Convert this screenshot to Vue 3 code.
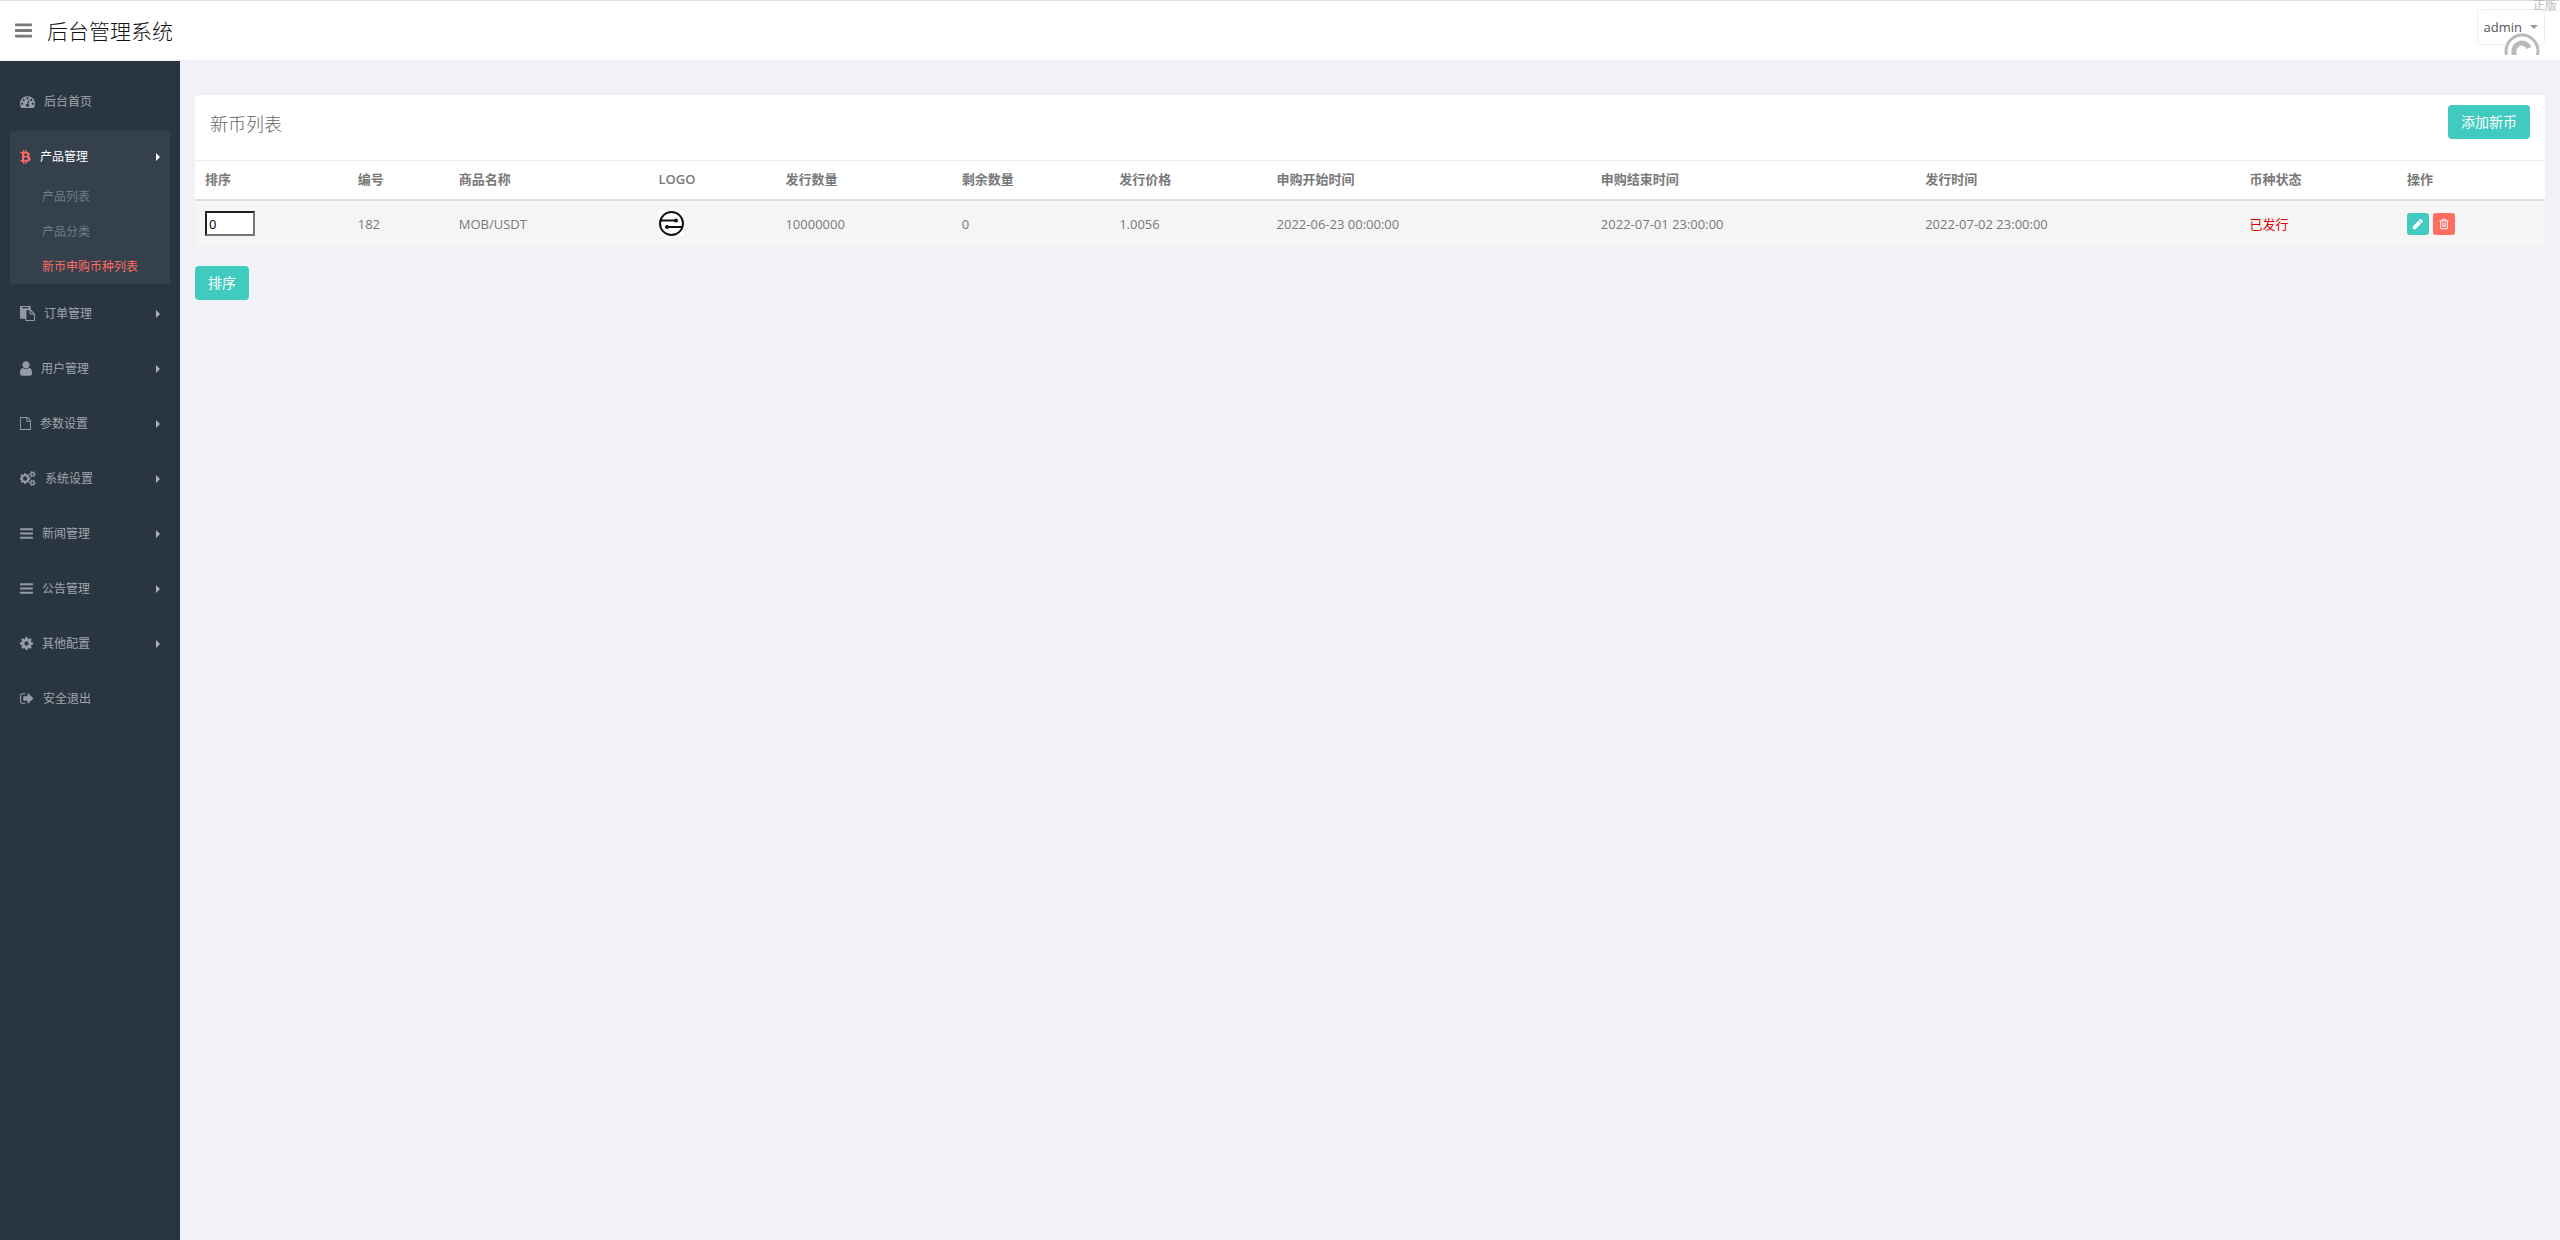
<script setup>
import { ref } from 'vue'

const icons = {
  bars: 'M1664 1344v128q0 26-19 45t-45 19h-1408q-26 0-45-19t-19-45v-128q0-26 19-45t45-19h1408q26 0 45 19t19 45zm0-512v128q0 26-19 45t-45 19h-1408q-26 0-45-19t-19-45v-128q0-26 19-45t45-19h1408q26 0 45 19t19 45zm0-512v128q0 26-19 45t-45 19h-1408q-26 0-45-19t-19-45v-128q0-26 19-45t45-19h1408q26 0 45 19t19 45z',
  dashboard: 'M384 1152q0-53-37.5-90.5t-90.5-37.5-90.5 37.5-37.5 90.5 37.5 90.5 90.5 37.5 90.5-37.5 37.5-90.5zm192-448q0-53-37.5-90.5t-90.5-37.5-90.5 37.5-37.5 90.5 37.5 90.5 90.5 37.5 90.5-37.5 37.5-90.5zm428 481l101-382q6-26-7.5-48.5t-38.5-29.5-48 6.5-30 39.5l-101 382q-60 5-107 43.5t-63 98.5q-20 77 20 146t117 89 146-20 89-117q16-60-6-117t-72-91zm660-33q0-53-37.5-90.5t-90.5-37.5-90.5 37.5-37.5 90.5 37.5 90.5 90.5 37.5 90.5-37.5 37.5-90.5zm-640-640q0-53-37.5-90.5t-90.5-37.5-90.5 37.5-37.5 90.5 37.5 90.5 90.5 37.5 90.5-37.5 37.5-90.5zm448 192q0-53-37.5-90.5t-90.5-37.5-90.5 37.5-37.5 90.5 37.5 90.5 90.5 37.5 90.5-37.5 37.5-90.5zm320 448q0 261-141 483-19 29-54 29h-1402q-35 0-54-29-141-221-141-483 0-182 71-348t191-286 286-191 348-71 348 71 286 191 191 286 71 348z',
  btc: 'M1399 618q18 182-131 258 117 28 175 103t45 214q-7 71-32.5 125t-64.5 89-97 58.5-121.5 34.5-145.5 15v255h-154v-251q-80 0-122-1v252h-154v-255q-18 0-54-.5t-55-.5h-200l31-183h111q50 0 58-51v-402h16q-6-1-16-1v-287q-13-68-89-68h-111v-164l212 1q64 0 97-1v-252h154v247q82-2 122-2v-245h154v252q79 7 140 22.5t113 45 82.5 78 36.5 114.5zm-215 545q0-36-15-64t-37-46-57.5-30.5-65.5-18.5-74-9-69-3-64.5 1-47.5 1v338q8 0 37 .5t48 .5 53-1.5 58.5-4 57-8.5 55.5-14 47.5-21 39.5-30 24.5-40 9.5-51zm-71-476q0-33-12.5-58.5t-30.5-42-48-28-55-16.5-61.5-8-58-2.5-54 1-39.5.5v307q5 0 34.5.5t46.5 0 50-2 55-5.5 51.5-11 48.5-18.5 37-27 27-38.5 9-51z',
  paste: 'M768 1664h896v-640h-416q-40 0-68-28t-28-68v-416h-384v1152zm256-1440v-64q0-13-9.5-22.5t-22.5-9.5h-704q-13 0-22.5 9.5t-9.5 22.5v64q0 13 9.5 22.5t22.5 9.5h704q13 0 22.5-9.5t9.5-22.5zm256 672h299l-299-299v299zm512 128v672q0 40-28 68t-68 28h-960q-40 0-68-28t-28-68v-160h-544q-40 0-68-28t-28-68v-1344q0-40 28-68t68-28h1088q40 0 68 28t28 68v328q21 13 36 28l408 408q28 28 48 76t20 88z',
  user: 'M1536 1399q0 109-62.5 187t-150.5 78h-854q-88 0-150.5-78t-62.5-187q0-85 8.5-160.5t31.5-152 58.5-131 94-89 134.5-34.5q131 128 313 128t313-128q76 0 134.5 34.5t94 89 58.5 131 31.5 152 8.5 160.5zm-256-887q0 159-112.5 271.5t-271.5 112.5-271.5-112.5-112.5-271.5 112.5-271.5 271.5-112.5 271.5 112.5 112.5 271.5z',
  file: 'M1596 380q28 28 48 76t20 88v1152q0 40-28 68t-68 28h-1344q-40 0-68-28t-28-68v-1600q0-40 28-68t68-28h896q40 0 88 20t76 48zm-444-244v376h376q-10-29-22-41l-313-313q-12-12-41-22zm384 1528v-1024h-416q-40 0-68-28t-28-68v-416h-768v1536h1280z',
  cogs: 'M832 896q0-106-75-181t-181-75-181 75-75 181 75 181 181 75 181-75 75-181zm768 512q0-52-38-90t-90-38-90 38-38 90q0 53 37.5 90.5t90.5 37.5 90.5-37.5 37.5-90.5zm0-1024q0-52-38-90t-90-38-90 38-38 90q0 53 37.5 90.5t90.5 37.5 90.5-37.5 37.5-90.5zm-384 421v185q0 10-7 19.5t-16 10.5l-155 24q-11 35-32 76 34 48 90 115 7 11 7 20 0 12-7 19-23 30-82.5 89.5t-78.5 59.5q-11 0-21-7l-115-90q-37 19-77 31-11 108-23 155-7 24-30 24h-186q-11 0-20-7.5t-10-17.5l-23-153q-34-10-75-31l-118 89q-7 7-20 7-11 0-21-8-144-133-144-160 0-9 7-19 10-14 41-53t47-61q-23-44-35-82l-152-24q-10-1-17-9.5t-7-19.5v-185q0-10 7-19.5t16-10.5l155-24q11-35 32-76-34-48-90-115-7-11-7-20 0-12 7-20 22-30 82-89t79-59q11 0 21 7l115 90q34-18 77-32 11-108 23-154 7-24 30-24h186q11 0 20 7.5t10 17.5l23 153q34 10 75 31l118-89q8-7 20-7 11 0 21 8 144 133 144 160 0 8-7 19-12 16-42 54t-45 60q23 48 34 82l152 23q10 2 17 10.5t7 19.5zm640 533v140q0 16-149 31-12 27-30 52 51 113 51 138 0 4-4 7-122 71-124 71-8 0-46-47t-52-68q-20 2-30 2t-30-2q-14 21-52 68t-46 47q-2 0-124-71-4-3-4-7 0-25 51-138-18-25-30-52-149-15-149-31v-140q0-16 149-31 13-29 30-52-51-113-51-138 0-4 4-7 4-2 35-20t59-34 30-16q8 0 46 46.5t52 67.5q20-2 30-2t30 2q51-71 92-112l6-2q4 0 124 70 4 3 4 7 0 25-51 138 17 23 30 52 149 15 149 31zm0-1024v140q0 16-149 31-12 27-30 52 51 113 51 138 0 4-4 7-122 71-124 71-8 0-46-47t-52-68q-20 2-30 2t-30-2q-14 21-52 68t-46 47q-2 0-124-71-4-3-4-7 0-25 51-138-18-25-30-52-149-15-149-31v-140q0-16 149-31 13-29 30-52-51-113-51-138 0-4 4-7 4-2 35-20t59-34 30-16q8 0 46 46.5t52 67.5q20-2 30-2t30 2q51-71 92-112l6-2q4 0 124 70 4 3 4 7 0 25-51 138 17 23 30 52 149 15 149 31z',
  cog: 'M1152 896q0-106-75-181t-181-75-181 75-75 181 75 181 181 75 181-75 75-181zm512-109v222q0 12-8 23t-20 13l-185 28q-19 54-39 91 35 50 107 138 10 12 10 25t-9 23q-27 37-99 108t-94 71q-12 0-26-9l-138-108q-44 23-91 38-16 136-29 186-7 28-36 28h-222q-14 0-24.5-8.5t-11.5-21.5l-28-184q-49-16-90-37l-141 107q-10 9-25 9-14 0-25-11-126-114-165-168-7-10-7-23 0-12 8-23 15-21 51-66.5t54-70.5q-27-50-41-99l-183-27q-13-2-21-12.5t-8-23.5v-222q0-12 8-23t19-13l186-28q14-46 39-92-40-57-107-138-10-12-10-24 0-10 9-23 26-36 98.5-107.5t94.5-71.5q13 0 26 10l138 107q44-23 91-38 16-136 29-186 7-28 36-28h222q14 0 24.5 8.5t11.5 21.5l28 184q49 16 90 37l142-107q9-9 24-9 13 0 25 10 129 119 165 170 7 8 7 22 0 12-8 23-15 21-51 66.5t-54 70.5q26 50 41 98l183 28q13 2 21 12.5t8 23.5z',
  signOut: 'M704 1440q0 4 1 20t.5 26.5-3 23.5-10 19.5-20.5 6.5h-320q-119 0-203.5-84.5t-84.5-203.5v-704q0-119 84.5-203.5t203.5-84.5h320q13 0 22.5 9.5t9.5 22.5q0 4 1 20t.5 26.5-3 23.5-10 19.5-20.5 6.5h-320q-66 0-113 47t-47 113v704q0 66 47 113t113 47h312l11.5 1 11.5 3 8 5.5 7 9 2 13.5zm928-544q0 26-19 45l-544 544q-19 19-45 19t-45-19-19-45v-288h-448q-26 0-45-19t-19-45v-384q0-26 19-45t45-19h448v-288q0-26 19-45t45-19 45 19l544 544q19 19 19 45z',
  pencil: 'M960 416l416 416-832 832h-416v-416zm683 96q0 53-37 90l-166 166-416-416 166-165q36-38 90-38 53 0 91 38l235 234q37 39 37 91z',
  trash: 'M704 736v576q0 14-9 23t-23 9h-64q-14 0-23-9t-9-23v-576q0-14 9-23t23-9h64q14 0 23 9t9 23zm256 0v576q0 14-9 23t-23 9h-64q-14 0-23-9t-9-23v-576q0-14 9-23t23-9h64q14 0 23 9t9 23zm256 0v576q0 14-9 23t-23 9h-64q-14 0-23-9t-9-23v-576q0-14 9-23t23-9h64q14 0 23 9t9 23zm128 724v-948h-896v948q0 22 7 40.5t14.5 27 10.5 8.5h832q3 0 10.5-8.5t14.5-27 7-40.5zm-672-1076h448l-48-117q-7-9-17-11h-317q-10 2-17 11zm928 32v64q0 14-9 23t-23 9h-96v948q0 83-47 143.5t-113 60.5h-832q-66 0-113-58.5t-47-141.5v-952h-96q-14 0-23-9t-9-23v-64q0-14 9-23t23-9h309l70-167q15-37 54-63t79-26h320q40 0 79 26t54 63l70 167h309q14 0 23 9t9 23z',
}

const menu = [
  { label: '后台首页', icon: 'dashboard', width: 15, box: '0 0 1792 1792' },
  {
    label: '产品管理', icon: 'btc', width: 11, box: '256 0 1280 1792', arrow: true, open: true,
    children: [{ label: '产品列表' }, { label: '产品分类' }, { label: '新币申购币种列表', current: true }],
  },
  { label: '订单管理', icon: 'paste', width: 15, box: '0 0 1792 1792', arrow: true },
  { label: '用户管理', icon: 'user', width: 12, box: '256 128 1280 1536', arrow: true },
  { label: '参数设置', icon: 'file', width: 11, box: '128 -128 1536 2048', arrow: true },
  { label: '系统设置', icon: 'cogs', width: 16, box: '0 0 1856 1792', arrow: true },
  { label: '新闻管理', icon: 'bars', width: 13, box: '128 0 1536 1792', arrow: true },
  { label: '公告管理', icon: 'bars', width: 13, box: '128 0 1536 1792', arrow: true },
  { label: '其他配置', icon: 'cog', width: 13, box: '128 0 1536 1792', arrow: true },
  { label: '安全退出', icon: 'signOut', width: 14, box: '64 0 1664 1792' },
]

const columns = [
  { title: '排序', cls: 'c-sort' },
  { title: '编号', cls: 'c-id' },
  { title: '商品名称', cls: 'c-name' },
  { title: 'LOGO', cls: 'c-logo' },
  { title: '发行数量', cls: 'c-total' },
  { title: '剩余数量', cls: 'c-price' },
  { title: '发行价格', cls: 'c-price' },
  { title: '申购开始时间', cls: 'c-time' },
  { title: '申购结束时间', cls: 'c-time' },
  { title: '发行时间', cls: 'c-time' },
  { title: '币种状态', cls: 'c-price' },
  { title: '操作', cls: 'c-ops' },
]

const rows = ref([
  {
    sort: '0', id: 182, name: 'MOB/USDT', total: '10000000', left: '0', price: '1.0056',
    start: '2022-06-23 00:00:00', end: '2022-07-01 23:00:00', issue: '2022-07-02 23:00:00', status: '已发行',
  },
])
</script>

<template>
  <div class="page">
    <header class="header">
      <button class="toggle" type="button" aria-label="菜单">
        <svg viewBox="128 256 1536 1280"><path :d="icons.bars" /></svg>
      </button>
      <a class="brand" href="#">后台管理系统</a>
      <button class="user" type="button">admin<span class="caret"></span></button>
      <span class="seal-text" aria-hidden="true">正版</span>
      <svg class="seal" viewBox="0 0 36 22" aria-hidden="true">
        <circle cx="18" cy="18" r="16" fill="none" stroke="#b9b9b9" stroke-width="3" />
        <path d="M25 15a8 9 0 1 0 0 8" fill="none" stroke="#b9b9b9" stroke-width="5" />
      </svg>
    </header>

    <div class="body">
      <aside class="sidebar">
        <ul class="menu">
          <li v-for="item in menu" :key="item.label" :class="{ open: item.open }">
            <a href="#" class="item">
              <svg class="icon" :viewBox="item.box" :style="{ width: item.width + 'px' }"><path :d="icons[item.icon]" /></svg>
              <span>{{ item.label }}</span>
              <span v-if="item.arrow" class="arrow"></span>
            </a>
            <ul v-if="item.children" class="sub">
              <li v-for="child in item.children" :key="child.label">
                <a href="#" :class="{ current: child.current }">{{ child.label }}</a>
              </li>
            </ul>
          </li>
        </ul>
      </aside>

      <main class="main">
        <section class="panel">
          <div class="panel-head">
            <h1>新币列表</h1>
            <button class="btn" type="button">添加新币</button>
          </div>
          <table>
            <colgroup>
              <col v-for="col in columns" :key="col.title" :class="col.cls" />
            </colgroup>
            <thead>
              <tr><th v-for="col in columns" :key="col.title" scope="col">{{ col.title }}</th></tr>
            </thead>
            <tbody>
              <tr v-for="row in rows" :key="row.id">
                <td><input v-model="row.sort" class="sort" type="text" aria-label="排序" /></td>
                <td>{{ row.id }}</td>
                <td>{{ row.name }}</td>
                <td>
                  <svg class="coin" viewBox="0 0 25 25" aria-label="MOB" role="img">
                    <rect width="25" height="25" fill="#fff" />
                    <circle cx="12.5" cy="12.5" r="11.5" fill="none" stroke="#111" stroke-width="2" />
                    <path d="M2 9.5h15M8 16h15" stroke="#111" stroke-width="2" />
                    <circle cx="17" cy="9.5" r="2" fill="#111" />
                    <circle cx="8" cy="16" r="2" fill="#111" />
                  </svg>
                </td>
                <td>{{ row.total }}</td>
                <td>{{ row.left }}</td>
                <td>{{ row.price }}</td>
                <td>{{ row.start }}</td>
                <td>{{ row.end }}</td>
                <td>{{ row.issue }}</td>
                <td class="status">{{ row.status }}</td>
                <td>
                  <div class="ops">
                    <button class="op edit" type="button" aria-label="编辑"><svg viewBox="0 0 1792 1792"><path :d="icons.pencil" /></svg></button>
                    <button class="op remove" type="button" aria-label="删除"><svg viewBox="0 0 1792 1792"><path :d="icons.trash" /></svg></button>
                  </div>
                </td>
              </tr>
            </tbody>
          </table>
        </section>
        <button class="btn" type="button">排序</button>
      </main>
    </div>
  </div>
</template>

<style>
body {
  background: #f1f2f7;
}
</style>

<style scoped>
.page {
  display: flex;
  flex-direction: column;
  min-height: 100vh;
  font-family: "Open Sans", "Noto Sans CJK SC", sans-serif;
  font-size: 13px;
  line-height: 20px;
  color: #797979;
}
a {
  text-decoration: none;
}
button {
  font: inherit;
  cursor: pointer;
}
ul {
  list-style: none;
  margin: 0;
  padding: 0;
}
svg {
  display: block;
  fill: currentColor;
}
.header {
  position: relative;
  display: flex;
  align-items: center;
  box-sizing: border-box;
  height: 61px;
  padding: 0 15px;
  border-top: 1px solid #ddd;
  border-bottom: 1px solid #f1f2f7;
  background: #fff;
}
.toggle {
  padding: 0;
  border: 0;
  background: none;
  color: #797979;
}
.toggle svg {
  width: 17px;
  height: 15px;
}
.brand {
  margin-left: 15px;
  font-size: 21px;
  line-height: 30px;
  font-weight: 300;
  color: #111;
}
.user {
  display: flex;
  align-items: center;
  gap: 8px;
  height: 36px;
  margin: 0 0 8px auto;
  padding: 0 6px;
  border: 1px solid #eee;
  border-radius: 4px;
  background: #fff;
  color: #555;
}
.caret {
  border: 4px solid transparent;
  border-top-color: #999;
  border-bottom: 0;
}
.seal-text {
  position: absolute;
  top: -3px;
  right: 3px;
  font-size: 12px;
  line-height: 16px;
  color: #bbb;
}
.seal {
  position: absolute;
  right: 20px;
  bottom: 5px;
  width: 36px;
  height: 22px;
}
.body {
  display: flex;
  flex: 1;
}
.sidebar {
  flex: none;
  width: 180px;
  background: #2a3542;
}
.menu {
  padding: 14px 10px 0;
  font-size: 12px;
}
.menu > li {
  margin-bottom: 1px;
  border-radius: 4px;
}
.item {
  display: flex;
  align-items: center;
  box-sizing: border-box;
  height: 54px;
  padding: 0 10px;
  color: #a0a6ad;
}
.icon {
  height: 15px;
  margin: 0 9px 2px 0;
  color: #939ca5;
}
.arrow {
  margin-left: auto;
  border: 4px solid transparent;
  border-left-color: #aeb2b7;
  border-right: 0;
}
.open {
  background: #35404d;
}
.menu > .open {
  margin: 2px 0 3px;
}
.open > .item {
  height: 48px;
  padding-top: 4px;
  color: #fff;
}
.open .icon {
  color: #ff6c60;
}
.open .arrow {
  border-left-color: #fff;
}
.sub a {
  display: block;
  padding-left: 32px;
  line-height: 35px;
  color: #6f7c89;
}
.sub .current {
  color: #ff6c60;
}
.main {
  flex: 1;
  min-width: 0;
  padding: 34px 15px;
}
.panel {
  margin-bottom: 20px;
  border-radius: 4px 4px 0 0;
  background: #fff;
}
.panel-head {
  display: flex;
  justify-content: space-between;
  align-items: flex-start;
  padding: 10px 15px 21px;
}
h1 {
  margin: 4px 0 0;
  font-size: 18px;
  line-height: 30px;
  font-weight: 300;
  color: #666;
}
.btn {
  height: 34px;
  padding: 0 13px;
  border: 0;
  border-radius: 4px;
  background: #41cac0;
  font-size: 14px;
  color: #fff;
}
table {
  width: 100%;
  border-collapse: separate;
  border-spacing: 0;
  table-layout: fixed;
}
th,
td {
  padding: 10px;
  text-align: left;
  white-space: nowrap;
}
th {
  padding: 8px 10px 10px;
  border-top: 1px solid #eee;
  border-bottom: 2px solid #ddd;
  font-weight: 600;
}
td {
  background: #f5f5f5;
}
.c-sort { width: 6.5%; }
.c-id { width: 4.3%; }
.c-name { width: 8.5%; }
.c-logo { width: 5.4%; }
.c-total { width: 7.5%; }
.c-price { width: 6.7%; }
.c-time { width: 13.8%; }
.c-ops { width: 6.3%; }
.sort {
  display: block;
  box-sizing: border-box;
  width: 50px;
  height: 25px;
  padding: 1px 2px;
  border: 2px inset #767676;
  background: #fff;
  font: inherit;
  color: #000;
}
.coin {
  width: 25px;
  height: 25px;
}
.status {
  color: #d00;
}
.ops {
  display: flex;
  gap: 4px;
}
.op {
  display: flex;
  align-items: center;
  justify-content: center;
  width: 22px;
  height: 22px;
  padding: 0;
  border: 0;
  border-radius: 3px;
  color: #fff;
}
.op svg {
  width: 12px;
  height: 12px;
}
.edit {
  background: #41cac0;
}
.remove {
  background: #ff6c60;
}
</style>
